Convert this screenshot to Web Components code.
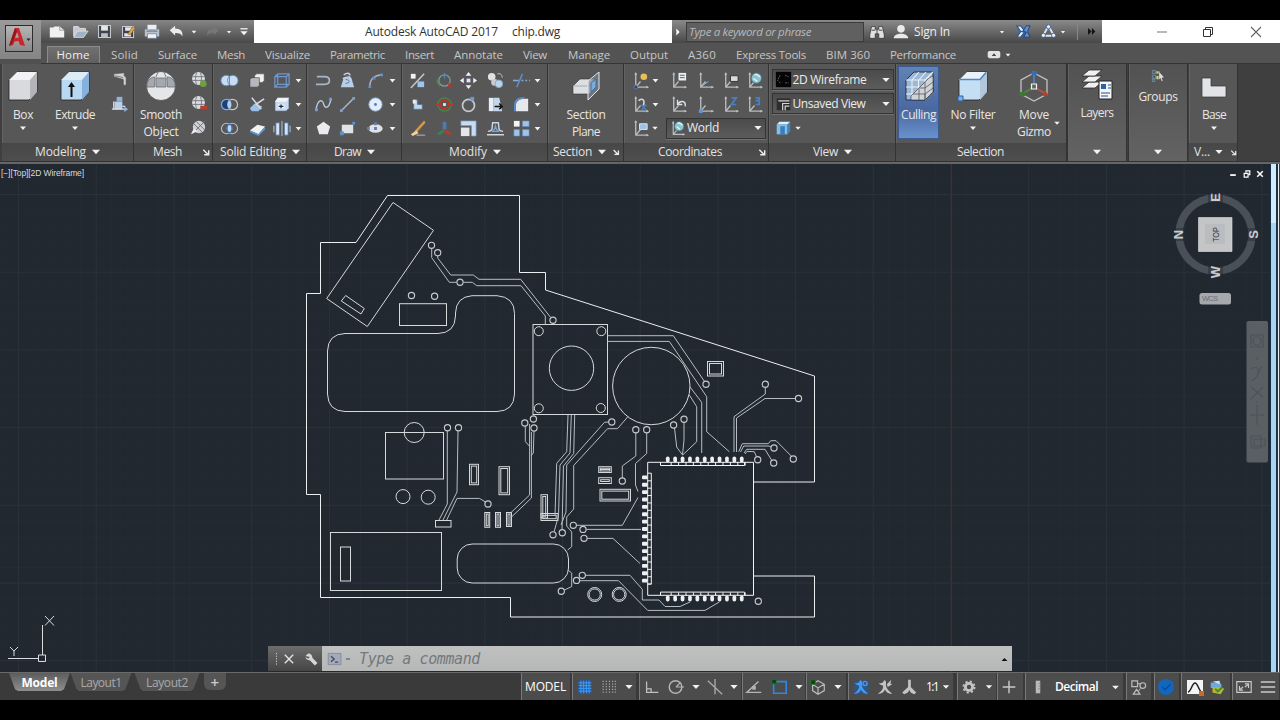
<!DOCTYPE html>
<html lang="en">
<head>
<meta charset="utf-8">
<title>Autodesk AutoCAD 2017 - chip.dwg</title>
<style>
html,body{margin:0;height:100%;background:#000;overflow:hidden}
</style>
</head>
<body>
<cad-app></cad-app>
<script>
const FONT='"Open Sans","Noto Sans",sans-serif';
const pen=document.createElement('canvas').getContext('2d');
const define=(name,render,after)=>customElements.define(name,class extends HTMLElement{
  connectedCallback(){
    if(!this.shadowRoot){this.attachShadow({mode:'open'}).innerHTML=render(this);}
    if(after)after(this);
  }
});
const at=(el,k,d)=>el.hasAttribute(k)?el.getAttribute(k):d;

/* ---------- icon library ---------- */
const B='#8fb8e4',DB='#4a7fc4';
const axes=`<path d="M5 2v15h13M5 17l5-6" fill="none" stroke="#b9bcc0" stroke-width="1.4"/><path d="M3.500 4 5 1l1.500 3M16 15.500 19 17l-3 1.500" fill="#b9bcc0"/>`;
const cube=(a,b,c)=>`<path d="M2 10 10 2h20v20l-8 8H2z" fill="${a}" stroke="#222" stroke-width=".8"/><path d="M2 10 10 2h20l-7 8z" fill="${b}"/><path d="M23 10 30 2v20l-7 8z" fill="${c}"/>`;
const ball=`<circle cx="10" cy="9" r="6.800" fill="#d8dadd"/><path d="M3.500 7h13M3.500 11h13M8 2.500c-1.500 4-1.500 9 0 13M12 2.500c1.500 4 1.500 9 0 13" stroke="#6d737a" fill="none" stroke-width=".9"/>`;
const figure=c=>`<path d="M9 2.500c3 0 2 4 2 6 1 4 4 6 7 9-5 0-7-2-8-5-1 3-3 5-8 5 4-3 6-5 6-9-2-1-4-1-5-3 3 1 5 0 6-3z" fill="${c}"/>`;
const ICONS={
 newdoc:`<path d="M2 5h4l1-1h6l5 4v8H2z" fill="#f0f0ee"/><path d="M13 4v4h5" fill="none" stroke="#999"/>`,
 open:`<path d="M3 15V4h5l2 2h6v3" fill="#c4c9cf" stroke="#dfe3e6"/><path d="m3 16 4-7h12l-5 7z" fill="#9fb2c6" stroke="#e6e9ec" stroke-width=".8"/>`,
 save:`<path d="M3 3h14v14H3z" fill="#3c434b" stroke="#c9cdd2" stroke-width="1.200"/><path d="M6 3h8v6H6z" fill="#e3e6e9"/><path d="M6 12h8v5H6z" fill="#b9bec4"/>`,
 saveas:`<path d="M3 4h13v13H3z" fill="#3c434b" stroke="#c9cdd2" stroke-width="1.200"/><path d="M6 5h8v4H6zM5 12h8v4H5z" fill="#e3e6e9"/><path d="m9 13 6-9 3 2-6 8z" fill="#dca24e" stroke="#6b4a1b" stroke-width=".5"/>`,
 print:`<path d="M5 2h10v5H5z" fill="#eceff1"/><path d="M2 7h16v8H2z" fill="#b9c2cb"/><path d="M5 12h10v5H5z" fill="#f4f4f4" stroke="#66809c" stroke-width=".8"/><path d="M4 9h12" stroke="#4e6a8a"/>`,
 undo:`<path d="M3 8 9 3v3c6 0 9 3 8 9-1-3-3-4-8-4v3z" fill="#e9ebed"/>`,
 redo:`<path d="m17 8-6-5v3c-6 0-9 3-8 9 1-3 3-4 8-4v3z" fill="#777"/>`,
 qat:`<path d="M5.500 6h9" stroke="#f4f4f4" stroke-width="1.600"/><path d="M5.500 9h9L10 14z" fill="#f4f4f4"/>`,
 binoc:`<path d="M4 4h4v3h4V4h4l2 9v4h-6v-5H8v5H2v-4z" fill="#dfe2e5" stroke="#222" stroke-width=".7"/><path d="M10 7v5M4 8h4M12 8h4" stroke="#333"/>`,
 user:`<circle cx="10" cy="6.500" r="4.200" fill="#e8eaec"/><path d="M2 17c0-4 4-4 6-5h4c2 1 6 1 6 5z" fill="#e8eaec"/>`,
 exch:`<path d="M3 4h4l4 5-3 1 3 1-4 5H3l4-6z" fill="#e6edf6" stroke="#2a5a9c" stroke-width="1.300"/><path d="M17 4h-4l-3 5 3 2-3 5h7l-3-6z" fill="#5a93d6" stroke="#1c427a"/>`,
 a360:`<path d="M10 3.500 3.500 15h13z" fill="none" stroke="#d8e6f8" stroke-width="2.200"/><circle cx="10" cy="4.500" r="2.500" fill="#e7eef7" stroke="#2d5c9c"/><circle cx="4" cy="14.500" r="2.500" fill="#e7eef7" stroke="#2d5c9c"/><circle cx="16" cy="14.500" r="2.500" fill="#e7eef7" stroke="#2d5c9c"/>`,
 ff:`<path d="m6 6 4 4-4 4zM10.500 6l4 4-4 4z" fill="#111"/>`,
 play:`<path d="m8 5.500 4 4.500-4 4.500z" fill="#fff"/>`,
 cam:`<rect x="3" y="5.500" width="14" height="8" rx="2" fill="#e2e2e2"/><path d="m7.500 11 2.500-3 2.500 3z" fill="#444"/>`,
 box:cube('#d9dade','#f2f2f4','#b3b5bb'),
 extrude:cube('#b9d8f2','#dcebf8','#86b1dc')+`<path d="M12.500 27V14" stroke="#111" stroke-width="2"/><path d="m9 17 3.500-5 3.500 5z" fill="#111"/>`,
 sphere:`<circle cx="16" cy="16" r="14.500" fill="#e4e6e8" stroke="#333" stroke-width=".6"/><path d="M11 8h10v9H11zM3 11c2-3 4-4 7-4l-.5 10H2c0-2 0-4 1-6zM29 11c-2-3-4-4-7-4l.5 10H30c0-2 0-4-1-6z" fill="#a5a9af" stroke="#6b6f75" stroke-width=".8"/><path d="M11 7 13 2M21 7l-2-5" stroke="#777b81"/>`,
 section:`<path d="m3 16 7-7h14v11l-5 4H3z" fill="#dcdee1" stroke="#333" stroke-width=".6"/><path d="M3 16h16l5-7" fill="none" stroke="#aaa"/><path d="M18 11 29 2v17L18 30z" fill="#7d8894" fill-opacity=".65" stroke="#e6e6e6"/><path d="m21 13 5-4v8l-5 5z" fill="#80aada" stroke="#3d6ea8"/>`,
 culling:`<path d="M3 10 11 2h19v20l-8 8H3z" fill="#9db8d6" stroke="#20334f"/><path d="M3 10h19M22 10l8-8M22 10v20M9 10v20M15.500 10v20M9 10l7-8M16 10l7-8M3 17h19l8-8M3 24h19l8-8M26 6v20" stroke="#e9f0f8" stroke-width="1.100" fill="none"/><path d="M8 30v-4L26 8l4-2v16l-8 8z" fill="#cfd4da" stroke="#333" stroke-width=".6"/><path d="M10 24h12v6M16 19v11M22 12v18M22 24l8-6M22 18l8-6M16 18h6" fill="none" stroke="#555" stroke-width=".8"/>`,
 nofilter:cube('#c4dff4','#e9f2fa','#b3c6da')+`<path d="M3 9.500h20l6-7" stroke="#4a86c8" stroke-width="1.600" fill="none"/><path d="M1 26h5v5H1z" fill="#7fb0e6" stroke="#2f5fa0"/>`,
 gizmo:`<path d="M16 3 29 10v14l-13 7L3 24V10z" fill="none" stroke="#c2c2c2" stroke-width="1.300"/><path d="M16 4v12" stroke="#4b86cc" stroke-width="1.600"/><path d="m16 17-12 7" stroke="#4c8c3c" stroke-width="1.600"/><path d="m16 17 12 7" stroke="#c0503a" stroke-width="1.600"/><path d="M13.500 1h5v4h-5z" fill="#2f6fc0"/><path d="M1 22h6v4H1z" fill="#3a7a2e"/><path d="m27 20 4 6h-6z" fill="#bc3e2a"/><path d="M13.500 14h5v5h-5z" fill="#666" stroke="#f2f2f2" stroke-width="1.200"/>`,
 layers:`<g fill="#f0f0f0" stroke="#2a2a2a" stroke-width=".8"><path d="m1 20 7-6h13l-7 6z"/><path d="m1 14 7-6h13l-7 6z"/><path d="m1 8 7-6h13l-7 6z"/></g><path d="M18 13h13v18H18z" fill="#f3f5f7" stroke="#222"/><path d="M20 16h5v5h-5z" fill="#2f5fa8"/><path d="M27 17h3M27 20h3M20 25h9M20 28h7" stroke="#274f8c"/>`,
 groups:`<path d="M3 3h4v4H3zM3 9h4v4H3zM3 14h3v3H3z" fill="#4d5f55" stroke="#7ba2d0" stroke-width=".8"/><path d="M8 4h4v3H8zM8 10h3v4H8z" fill="#cfd68a"/><path d="m11 4 7 8-3 .4 1.500 4-2 .6-1.500-4-2 2z" fill="#d9dde0" stroke="#333" stroke-width=".5"/>`,
 base:`<path d="M4 8h9v8h15v11H4z" fill="#e2e3e6" stroke="#333" stroke-width=".7"/>`,
 loft:`<path d="M4 4 15 3v3l2 2v8h-3v-6L4 7z" fill="#d0d2d5" stroke="#444" stroke-width=".6"/><path d="m5 6 9 2" stroke="#777"/>`,
 presspull:`<path d="M5 8h8v8H5z" fill="#bcd0e6"/><path d="M4 16V8M2 16h15M13 13h3" stroke="#dfe4ea" stroke-width="1.400" fill="none"/><path d="M7 3h6v5H7z" fill="#8fb3da"/><path d="m15 13 4 3-4 3z" fill="#8fb3da"/>`,
 meshplus:ball+`<circle cx="15" cy="14.500" r="3.500" fill="#6fa23c"/>`,
 meshminus:ball+`<path d="M12 12.500h7v3.500h-7z" fill="#b9402f"/>`,
 meshref:`<circle cx="10.500" cy="9.500" r="6.500" fill="#cfd1d5"/><path d="m3 17 14-14M5 6l9 9M8 4l8 8" stroke="#6d737a" fill="none"/><path d="m2 17 7-3-4-3z" fill="#ececec"/>`,
 union:`<circle cx="6.500" cy="10" r="5.500" fill="#c8dcf2" stroke="#5b8dc8"/><circle cx="13.500" cy="10" r="5.500" fill="#c8dcf2" stroke="#5b8dc8"/><path d="M10 6v8" stroke="#5b8dc8"/>`,
 subtract:`<circle cx="13" cy="10" r="5.500" fill="none" stroke="#c3c6ca" stroke-width="1.300"/><path d="M7 4.500a5.500 5.500 0 1 0 0 11c2 0 3-1 3-1-2.500-2.500-2.500-6.500 0-9 0 0-1-1-3-1z" fill="#1f3f78" stroke="#7da8dd" stroke-width="1.300"/><ellipse cx="10" cy="10" rx="2" ry="4" fill="#b2cdeb"/>`,
 intersect:`<circle cx="7" cy="10" r="5.500" fill="none" stroke="#b9bcc0" stroke-width="1.200"/><circle cx="13" cy="10" r="5.500" fill="none" stroke="#b9bcc0" stroke-width="1.200"/><ellipse cx="10" cy="10" rx="2.600" ry="4.300" fill="#bcd6f2" stroke="#3a6cb0" stroke-width="1.300"/>`,
 solids:`<path d="M7 5 9 3h8v7l-2 2H7z" fill="#f0f0f0" stroke="#555" stroke-width=".6"/><path d="M2 9 4 7h8v8l-2 2H2z" fill="#b4b7bc" stroke="#333" stroke-width=".6"/>`,
 slice:`<path d="m2 14 5-5 8 3-4 5H4z" fill="#9cc0e6"/><path d="M4 3 14 15M17 4 8 10" stroke="#d7dade" stroke-width="1.600"/>`,
 thicken:`<path d="m2 12 8-6 8 2-7 8z" fill="#eff1f3"/><path d="m2 12 9 4v2l-9-4zM11 16l7-8v3l-7 7z" fill="#5d93cf"/>`,
 extract:`<path d="M3 6 6 3h12v11l-3 3H3zM3 6h12v11M15 6l3-3M6 3v11h12M6 14l-3 3" fill="none" stroke="#6f97cf" stroke-width="1.300"/>`,
 faces:`<path d="m3 7 3-4h12v11l-3 3H3z" fill="#c8dbef" stroke="#345" stroke-width=".7"/><path d="m3 7 3-4h12l-3 4z" fill="#eef4fa"/><path d="M6 10h7v4H6z" fill="#eef4fa"/><path d="M7 12h5M9.500 14V10" stroke="#1b2b3c" stroke-width="1.300"/>`,
 separate:`<path d="M4 4h4v13H4zM13 4h4v13h-4z" fill="#d4e4f4" stroke="#456b98" stroke-width=".8"/><path d="M10.500 2v16M2 7v7M19 7v7" stroke="#b9ccdf"/>`,
 pline:`<path d="M3 6h8c7 0 7 8 0 8H2" fill="none" stroke="#a3b6cc" stroke-width="1.800"/>`,
 helix:`<path d="M6 4c6-4 9 1 4 3M5 8c8-4 11 0 5 4" fill="none" stroke="#cfd3d8" stroke-width="1.500"/><path d="m3 17 3-10h8l3 10z" fill="#b9cfe7"/><path d="M8 5h6M8 9c5 0 5 4 0 4" stroke="#51749e" fill="none"/>`,
 arc:`<path d="M4 16C4 9 8 5 16 4" fill="none" stroke="#a9b0b8" stroke-width="1.500"/><path d="M2.500 15h3v3h-3zM15 2.500h3v3h-3zM7 6h3v3H7z" fill="#5f8fc9"/>`,
 spline:`<path d="M2 16C4 3 9 5 10 9s5 8 8-5" fill="none" stroke="#b9c9dc" stroke-width="1.500"/><path d="M1 14h3v3H1zM16 3h3v3h-3z" fill="#77a0d2"/>`,
 line:`<path d="M4 16 16 4" stroke="#a6b3c2" stroke-width="1.700"/><path d="M2 15h3v3H2zM15 2h3v3h-3z" fill="#77a0d2"/>`,
 circle:`<circle cx="10" cy="10" r="7" fill="#e3edf7" stroke="#8ba9cb"/><circle cx="10" cy="10" r="1.500" fill="#4c7fc0"/>`,
 polygon:`<path d="m10 3 7 5-2.500 8h-9L3 8z" fill="#e9ebee"/>`,
 rect:`<path d="M4 6h12v9H4z" fill="#dfe3e8"/><path d="M2 13h4v4H2zM15 3h3v3h-3z" fill="#5f8fc9"/>`,
 ellipse:`<ellipse cx="10" cy="10" rx="7.500" ry="4.500" fill="#dfe3e8"/><path d="M8.500 8.500h3v3h-3zM8.500 3.500h3v3h-3zM1 8.500h3v3H1z" fill="#5f7fa9"/>`,
 array1:`<path d="M3 3h5v5H3z" fill="#f1f1f1"/><path d="M3 18 17 3" stroke="#c7c9cc" stroke-width="1.500"/><path d="M10 11h7v6h-7z" fill="#9cc4ee"/>`,
 rot3a:`<circle cx="10" cy="10" r="6" fill="none" stroke="#7c9aa0" stroke-width="1.300"/><path d="M10 2v6" stroke="#4a8fca"/><path d="M14 13h4v4h-4z" fill="#b03630"/><path d="M3 8a7 7 0 0 0 2 8" stroke="#3f8c3c" fill="none" stroke-width="1.500"/>`,
 move:`<path d="m10 1 3 4h-6zM10 19l3-4h-6zM1 10l4-3v6zM19 10l-4-3v6z" fill="#f0f1f2"/><path d="M7.500 7.500h5v5h-5z" fill="#e3e7ec" stroke="#557"/>`,
 copy:`<circle cx="6" cy="6" r="4" fill="#dfe1e4"/><circle cx="9" cy="12" r="3.500" fill="#c9cdd2"/><circle cx="13.500" cy="13.500" r="4" fill="#bcd3ec" stroke="#89a7c9"/><path d="M12 3c4-1 5 2 5 4" fill="none" stroke="#ccc"/>`,
 trim:`<path d="M1 10h6M10 10h2M14 10h2M18 10h1" stroke="#86acd6" stroke-width="1.600"/><path d="M5 17 11 3" stroke="#5f8fc9" stroke-width="1.600"/>`,
 offset:`<path d="M6 5h4v5h5v5H6z" fill="#bcd6f2" stroke="#55718f" stroke-width=".8"/><path d="M5 5h3v4H5z" fill="#eee"/>`,
 rot3b:`<circle cx="10" cy="10" r="7" fill="none" stroke="#3f8a4a" stroke-width="1.300"/><circle cx="10" cy="10" r="4.500" fill="none" stroke="#b7372f" stroke-width="1.800"/><path d="M8.500 8.500h3v3h-3z" fill="#e2e6ea"/><path d="M1 10h4M15 10h4" stroke="#b7372f" stroke-width="1.300"/>`,
 rotate:`<circle cx="10" cy="11" r="6.300" fill="none" stroke="#c5c8cc" stroke-width="1.800"/><path d="M12 2h4v4h-4z" fill="#6a9ad0"/>`,
 stretch:`<path d="M3 3h5v14H3z" fill="#e9eef4"/><path d="M8 3h6l3 14H8z" fill="#c2d6ec"/><path d="M9 12h8m-3-3 3 3-3 3" stroke="#111" fill="none" stroke-width="1.600"/>`,
 fillet:`<path d="M4 17V11c0-5 5-7 9-7h4v13z" fill="#e6e8eb"/><path d="M3 17V11c0-6 5-8 10-8" fill="none" stroke="#5a8ccc" stroke-width="1.800"/>`,
 erase:`<path d="m17 2 1 2-9 10-2-1z" fill="#e39a3b" stroke="#e39a3b" stroke-width=".6"/><path d="M9 12 3 16l2 2 6-3z" fill="#f2d3a0"/><path d="M9 17h9" stroke="#bbb"/>`,
 gizmo3:`<path d="M8 3h4v8H8z" fill="#4e7aae"/><path d="m9 11-7 4 3 2 6-4z" fill="#3c8150"/><path d="m11 11 7 4-4 2-5-4z" fill="#b23d33"/>`,
 scale:`<path d="M2 2h16v16h-5V7H2z" fill="#c8ddf3" stroke="#6f94bd" stroke-width=".8"/><path d="M2 9h9v9H2z" fill="#e4e6e9"/>`,
 offset2:`<path d="M1 16.500h18M2 13c6 0 4-4 5-9h6c1 5-1 9 5 9" fill="none" stroke="#cfd5dc" stroke-width="1.500"/><path d="M6 13c4-1 3-3 4-6 1 3 0 5 4 6z" fill="none" stroke="#7ea5d4" stroke-width="1.300"/>`,
 array:`<path d="M2 2h6v6H2z" fill="#f4f4f4"/><path d="M11 2h7v6h-7zM2 11h6v7H2zM11 11h7v7h-7z" fill="#9ec2ea" stroke="#5d87b8" stroke-width=".6"/>`,
 ucs:axes+`<circle cx="13.500" cy="6" r="3.500" fill="#e8bd55"/><circle cx="5" cy="17" r="2" fill="#444" stroke="#4b86cc"/>`,
 ucsx:axes+`<path d="M8 6c4-4 7 0 5 5" fill="none" stroke="#d4d6d9" stroke-width="1.600"/><path d="m11 10 5 6m0-6-5 6" stroke="${DB}" stroke-width="1.500"/>`,
 ucsface:axes+`<path d="M9 5h8v6H9z" fill="#9dc0e8" stroke="#dfe6ee"/>`,
 ucsnamed:axes+`<path d="M10 2h8v8h-8z" fill="#eceff2"/><path d="M11.500 4.500h5M11.500 7h5" stroke="#557"/>`,
 ucsplain:axes+`<path d="m6 16 7-5" stroke="${B}"/>`,
 ucsview:axes+`<path d="M10 5h8v6h-8z" fill="#d9dcdf" stroke="#333"/>`,
 ucsworld:axes+`<circle cx="12" cy="7.500" r="5.500" fill="#8fc3cf" stroke="#3d7485"/><path d="M10 4c3-2 4 2 6 2M9 8l4 3" stroke="#e6f3f4" stroke-width="1.500" fill="none"/>`,
 ucsprev:axes+`<path d="M9 5v5h5M9 10c3-5 9-4 8 2" fill="none" stroke="#dcdee1" stroke-width="1.500"/>`,
 ucsorg:axes+`<path d="M3 15h4v4H3z" fill="#5f93d3"/>`,
 ucsz:axes+`<path d="M11 3h5l-5 7h5" fill="none" stroke="${DB}" stroke-width="1.800"/>`,
 ucs3:axes+`<path d="M11 3h4v7h-4M11 6h4" fill="none" stroke="${DB}" stroke-width="1.800"/>`,
 vs:`<path d="M1 1h18v18H1z" fill="#050505"/><path d="M6 5 3 11l4 4M12 5l4 2M12 14h4" stroke="#777" fill="none" stroke-dasharray="2 1"/>`,
 uv:`<path d="M2 4h16v14H2z" fill="#2d2d2d"/><path d="M4 7h13M9 18V10h8M12 18v-5h5" stroke="#d5d5d5" stroke-width="1.400" fill="none"/>`,
 vp:`<path d="m3 6 3-3h12l-3 3z" fill="#dff0fc"/><path d="M3 6h12v11H3z" fill="#7fc0ee"/><path d="m15 6 3-3v11l-3 3z" fill="#3f86c0"/><path d="M7 8h5v9H7z" fill="#3f7db8"/>`,
 launch:`<path d="M7 7.500 12 12.500M13 8v5H8" stroke="#eee" stroke-width="1.600" fill="none"/>`,
 wrench:`<path d="M3 6 6 3c4 0 5 3 5 5l6 6-3 3-6-6c-3 0-5-2-5-4l3 2 2-2z" fill="#d5d7d9"/>`,
 close:`<path d="m4 4 12 12m0-12L4 16" stroke="#e2e2e2" stroke-width="2"/>`,
 prompt:`<path d="M1.500 3h16v14h-16z" fill="#a4aab8" stroke="#7f8798"/><path d="m5 6.500 4 3.500-4 3.500M10 14h4" fill="none" stroke="#3f4660" stroke-width="1.600"/>`,
 grip:`<path d="M10 0v20" stroke="#c9c9c9" stroke-width="1.500" stroke-dasharray="2 2"/>`,
 gridon:`<rect x="2" y="2" width="16" height="16" rx="4" fill="#1d5fae" opacity=".55"/><path d="M5.500 3v14M8.500 3v14M11.500 3v14M14.500 3v14M3 5.500h14M3 8.500h14M3 11.500h14M3 14.500h14" stroke="#3d9bff" stroke-width="1.100"/>`,
 snap:`<path d="M3.500 3v14M7 3v14M10.500 3v14M14 3v14M17 3v14" stroke="#a8a8a8" stroke-width="1.300" stroke-dasharray="1.400 1.600"/>`,
 ortho:`<path d="M4 4v12h13M4 12h5v4" fill="none" stroke="#bfbfbf" stroke-width="1.400"/>`,
 polar:`<circle cx="9.500" cy="10" r="7" fill="none" stroke="#b5b5b5" stroke-width="1.600"/><path d="M10 10h9M10 10l5-5" stroke="#b5b5b5" stroke-width="1.200"/>`,
 iso:`<path d="m2 3 16 15M10 1v17" stroke="#a9a9a9" stroke-width="1.500"/>`,
 otrack:`<path d="M18 16H2L15 4" fill="none" stroke="#b5b5b5" stroke-width="1.500"/><path d="M8 9h4v4H8z" fill="#b5b5b5"/>`,
 osnap:`<path d="M4 4h14v13H4z" fill="none" stroke="#2f86e6" stroke-width="1.800"/><path d="M2 1.500h5v5H2z" fill="#123c16" stroke="#1f7a2c"/>`,
 osnap3:`<path d="m10 3 7 4v7l-7 4-6-4V7zM4 7l6 4 7-4M10 11v7" fill="none" stroke="#bcbcbc" stroke-width="1.300"/><path d="M2 2h5v5H2z" fill="#123c16" stroke="#1f7a2c"/>`,
 anno1:`<rect x="1" y="3" width="18" height="15" rx="5" fill="#1d5fae" opacity=".45"/>`+figure('#3d9bff')+`<circle cx="14.500" cy="6" r="2.300" fill="none" stroke="#3d9bff" stroke-width="1.500"/>`,
 anno2:figure('#c4c4c4')+`<path d="m12 7 5-5-1 4 2 1-5 3z" fill="#c4c4c4"/>`,
 anno3:`<path d="M9 2h3v8l6 6-2 2c-3-1-5-2-5.500-5-1 3-3 4-6 5l-2-2 6.500-6z" fill="#c4c4c4"/>`,
 gear:`<circle cx="10" cy="10" r="4.500" fill="none" stroke="#c4c4c4" stroke-width="3.500"/><circle cx="10" cy="10" r="7" fill="none" stroke="#c4c4c4" stroke-width="2.200" stroke-dasharray="2.750 2.750"/>`,
 plus:`<path d="M10 3v14M3 10h14" stroke="#c9c9c9" stroke-width="1.600"/>`,
 unit:`<path d="M7.500 3h5v14h-5z" fill="#b9b9b9"/><path d="M10.500 6h2M10.500 9h2M10.500 12h2" stroke="#888"/>`,
 quick:`<path d="M3 3h6v6H3zM8 12l3.500 5h-7z" fill="none" stroke="#bcbcbc" stroke-width="1.300"/><circle cx="14.500" cy="8" r="3" fill="none" stroke="#bcbcbc" stroke-width="1.300"/><path d="M9 6h3M12 11l-2 3" stroke="#bcbcbc"/>`,
 perf:`<circle cx="10" cy="10" r="9" fill="#1366bd"/><path d="m6 10 3 3 6-6" fill="none" stroke="#0d4c96" stroke-width="1.600"/>`,
 graph:`<path d="M2 3h16v14H2z" fill="#f4f4f4"/><path d="M3 15c3 0 4-9 7-9s4 9 7 9" fill="none" stroke="#222" stroke-width="1.500"/><path d="M14 14h5v5h-5z" fill="#cf6a25"/>`,
 trust:`<path d="M3 5h10l2 2v4H3z" fill="#6ea8dc"/><path d="m5 4 8-1v4z" fill="#cfe4f6"/><path d="M5 10h9l4 2-4 6-9-2z" fill="#b3b832"/><path d="m8 12 3 3 5-5" stroke="#3c8c31" stroke-width="2" fill="none"/>`,
 full:`<path d="M2 4h16v12H2z" fill="none" stroke="#c9c9c9" stroke-width="1.300"/><path d="m5 13 4-3M15 7l-4 3" stroke="#c9c9c9" stroke-width="1.400"/><path d="M5 9v4.500h4M11 6.500h4V11" fill="none" stroke="#c9c9c9" stroke-width="1.300"/>`,
 menu:`<path d="M2 4.500h16M2 10h16M2 15.500h16" stroke="#c9c9c9" stroke-width="1.800"/>`,
 wmin:`<path d="M5 10h10" stroke="#8a8a8a" stroke-width="1.200"/>`,
 wmax:`<path d="M5.500 7.500h7v7h-7zM7.500 7.500v-2h7v7h-2" fill="none" stroke="#333" stroke-width="1"/>`,
 wclose:`<path d="m5 5 10 10m0-10L5 15" stroke="#666" stroke-width="1.100"/>`,
 dmin:`<path d="M6 11.500h8" stroke="#fff" stroke-width="2.500"/>`,
 dmax:`<path d="M6 9h5.500v5.500H6zM8.500 8V5.500H14V11H12.500" fill="none" stroke="#fff" stroke-width="1.700"/>`,
 dclose:`<path d="m6 6 8 8m0-8-8 8" stroke="#fff" stroke-width="2.200"/>`,
 arr:`<path d="M7 8.500h6L10 12z" fill="#f2f2f2"/>`,
 arrL:`<path d="M5.500 7.600h9L10 12.400z" fill="#f2f2f2"/>`,
 up:`<path d="M6 12h8l-4-4z" fill="#111"/>`,
 minus:`<path d="M7 10h6" stroke="#60666f" stroke-width="1.800"/>`,
};
define('cad-icon',e=>{const n=at(e,'name'),big=+at(e,'box',20),s=+at(e,'w',20);
 return `<style>:host{display:block;flex:none;width:${s}px;height:${s}px}svg{display:block;overflow:visible}</style><svg width="${s}" height="${s}" viewBox="0 0 ${big} ${big}">${ICONS[n]||''}</svg>`});

/* Text whose tracking is tuned so that it spans a given width. */
define('cad-text',e=>`<style>:host{display:block;flex:none;white-space:nowrap;line-height:16px}</style><slot></slot>`,e=>{
 const s=at(e,'size','12'),w=+at(e,'w'),f=at(e,'font',FONT),t=e.textContent;
 pen.font=`${at(e,'slant','')} ${at(e,'weight','400')} ${s}px ${f}`;
 e.style.cssText+=`;width:${w}px;font:${at(e,'slant','')} ${at(e,'weight','400')} ${s}px/16px ${f};letter-spacing:${((w-pen.measureText(t).width)/t.length).toFixed(3)}px`;
});

/* Horizontal track: each child names its centre (c) and width (w), relative to the track's origin (o). */
define('cad-track',e=>`<style>:host{display:flex;align-items:center;flex:none;min-width:0}</style><slot></slot>`,e=>{
 let x=+at(e,'o',0);
 for(const k of e.children){const w=+at(k,'w',20),l=+at(k,'c')-w/2;k.style.marginLeft=(l-x)+'px';k.style.width=w+'px';x=l+w;}
});
const I=(n,c,w=20,b)=>`<cad-icon name="${n}" c="${c}" w="${w}"${b?` box="${b}"`:''}></cad-icon>`;
const T=(t,l,r,x='')=>`<cad-text c="${(l+r)/2}" w="${r-l}" ${x}>${t}</cad-text>`;
const TR=(o,body,css='')=>`<cad-track o="${o}" style="${css}">${body}</cad-track>`;

/* Large ribbon button: icon, one or two label lines, optional arrow. */
define('cad-button',e=>`<style>
:host{display:flex;flex-direction:column;align-items:center;flex:none;box-sizing:border-box;height:73px;padding-top:4px;color:#e6e6e6}
:host([on]){background:linear-gradient(#6283b4,#4a68a0 60%,#6a93cc);outline:1px solid #3a5c92;outline-offset:-1px}
.l{margin-top:5px;line-height:16px;display:flex;flex-direction:column;align-items:center;gap:1px}
.a{margin-top:-5px}</style>
<cad-icon name="${at(e,'icon')}" w="${at(e,'is','32')}" box="${at(e,'box','32')}"></cad-icon>
<div class="l">${at(e,'label').split('|').map(s=>{const[t,w]=s.split(':');return `<cad-text w="${w}">${t}</cad-text>`}).join('')}</div>
${e.hasAttribute('arrow')?`<cad-icon class="a" name="arr"></cad-icon>`:''}`);

define('cad-panel',e=>`<style>
:host{display:flex;flex-direction:column;flex:none;box-sizing:border-box;width:${at(e,'pw')}px;height:97px;border-right:1px solid #333;background:#575757;box-shadow:inset 1px 0 #636363;color:#e2e2e2}
:host([collapsed]){background:linear-gradient(#525252,#636363);outline:1px solid #333;border:0;margin:0 2px 0 1px}
.b{height:79px;display:flex;align-items:flex-start}
.t{height:18px;background:linear-gradient(#474747,#4e4e4e);display:flex;align-items:center}
:host([collapsed]) .t{background:none}</style>
<div class="b"><slot></slot></div><div class="t"><slot name="title"></slot></div>`);
const panel=(o,r,title,body,x='')=>`<cad-panel pw="${r-o}" ${x}>${body}<cad-track slot="title" o="${o}" style="align-items:center;height:20px">${title}</cad-track></cad-panel>`;

/* Stack of rows of small icons. */
define('cad-stack',e=>`<style>:host{display:flex;flex-direction:column;flex:none;padding-top:${at(e,'pt',4)}px}::slotted(cad-track){height:24px;align-items:center!important}::slotted(cad-icon){margin-bottom:5px}</style><slot></slot>`);
const stack=(o,rows)=>`<cad-stack>${rows.map(r=>TR(o,r,'align-items:center')).join('')}</cad-stack>`;
const column=(c,names)=>`<cad-stack c="${c}" w="19" pt="4">${names.split(' ').map(n=>`<cad-icon name="${n}" w="19"></cad-icon>`).join('')}</cad-stack>`;
const row=(names,cs)=>names.split(' ').map((n,i)=>I(n,cs[i],19)).join('');

define('cad-combo',e=>`<style>:host{display:flex;align-items:center;box-sizing:border-box;height:21px;background:linear-gradient(#4b4b4b,#5c5c5c);border:1px solid #343434;box-shadow:0 1px #707070;color:#ececec}
.g{flex:1}cad-icon{margin-left:2px}.t{margin-left:1px}</style>
<cad-icon name="${at(e,'icon')}" w="17"></cad-icon><cad-text class="t" w="${at(e,'tw')}">${at(e,'text')}</cad-text><div class="g"></div><cad-icon name="arrL" w="16" style="margin-right:-1px"></cad-icon>`);

define('cad-title',()=>`<style>:host{display:flex;height:23px;background:#fff;flex:none}
.q{width:213px;background:linear-gradient(#858585,#494949)}.q>*,.s>*{height:23px}
.n{width:418px;color:#333}.n>*{height:23px}
.s{width:430px;background:linear-gradient(#8a8a8a,#474747)}
.f{height:20px;box-sizing:border-box;background:#606060;border:1px solid #3c3c3c;color:#b9b9b9;display:flex;align-items:center;padding-left:2px}
.w>*{height:23px}</style>
<div class="q">${TR(41,I('newdoc',57,18)+I('open',80,18)+I('save',104,17)+I('saveas',128,17)+I('print',152,18)+I('undo',176,18)+I('arr',194,16)+I('redo',213,16)+I('arr',229,14)+I('qat',244,16))}</div>
<div class="n">${TR(254,T('Autodesk AutoCAD 2017',365,498)+T('chip.dwg',512,560))}</div>
<div class="s">${TR(672,I('play',678,16)+`<div class="f" c="775" w="178"><cad-text size="11.500" w="122" slant="italic">Type a keyword or phrase</cad-text></div>`+I('binoc',877,18)+I('user',901,18)+T('Sign In',914,950,'style="color:#eee"')+I('arr',1002,14)+I('exch',1023,19)+I('a360',1048,17)+I('arr',1063,14)+`<div c="1077" w="1" style="height:16px;background:#888"></div>`+I('ff',1091,17))}</div>
<div class="w">${TR(1102,I('wmin',1162)+I('wmax',1208)+I('wclose',1256))}</div>`);

define('cad-tabs',()=>{
 const tabs=[['Home',55,88],['Solid',111,138],['Surface',158,197],['Mesh',217,245],['Visualize',265,310],['Parametric',330,385],['Insert',405,434],['Annotate',454,503],['View',523,547],['Manage',568,610],['Output',630,668],['A360',688,716],['Express Tools',736,806],['BIM 360',826,870],['Performance',890,956]];
 return `<style>:host{display:flex;height:21px;background:#535353;border-bottom:1px solid #363636;box-sizing:border-box;color:#c6c6c6;flex:none}
 cad-track{height:20px;padding-top:3px;box-sizing:border-box}.h{height:17px;box-sizing:border-box;border:1px solid #8a8a8a;border-bottom:0;background:linear-gradient(#707070,#606060);display:flex;justify-content:center;align-items:center;color:#eee}</style>`
 +TR(41,tabs.map(([t,l,r],i)=>i?T(t,l,r,'size="11.500"'):`<div class="h" c="73" w="53"><cad-text w="33" size="11.500">${t}</cad-text></div>`).join('')+I('cam',994,18)+I('arr',1008,16))});

define('cad-ribbon',()=>{
 const B=(icon,label,c,w,x='')=>`<cad-button icon="${icon}" label="${label}" c="${c}" w="${w}" ${x}></cad-button>`;
 const s=[229,257,281,298],d=[323,347,375,392],m=[417,444,468,495,521,537];
 return `<style>:host{display:flex;height:100px;box-sizing:border-box;background:#3f3f3f;padding-left:2px;border-bottom:2px solid #666;flex:none;box-shadow:inset 0 -1px #333}
 cad-track{align-items:flex-start}.col{display:flex;flex-direction:column;gap:3px}</style>`
 +panel(2,134,T('Modeling',35,86)+I('arrL',96,18),TR(2,B('box','Box:20',23,40,'arrow')+B('extrude','Extrude:40',75,50,'arrow')+column(119,'loft presspull'),'padding-top:2px'))
 +panel(134,213,T('Mesh',153,182)+I('launch',206,18),TR(134,B('sphere','Smooth:42|Object:35',161,46)+column(198,'meshplus meshminus meshref'),'padding-top:2px'))
 +panel(213,307,T('Solid Editing',220,286)+I('arrL',296,18),stack(213,[row('union solids extract arr',s),row('subtract slice faces arr',s),row('intersect thicken separate arr',s)]))
 +panel(307,402,T('Draw',334,361)+I('arrL',371,18),stack(307,[row('pline helix arc arr',d),row('spline line circle arr',d),row('polygon rect ellipse arr',d)]))
 +panel(402,548,T('Modify',449,487)+I('arrL',497,18),stack(402,[row('array1 rot3a move copy trim arr',m),row('offset rot3b rotate stretch fillet arr',m),row('erase gizmo3 scale offset2 array arr',m)]))
 +panel(548,624,T('Section',553,592)+I('arrL',602,18)+I('launch',616,16),TR(548,B('section','Section:39|Plane:28',586,50),'padding-top:2px'))
 +panel(624,769,T('Coordinates',658,722)+I('launch',762,18),stack(624,[row('ucs arr ucsnamed ucsplain ucsview ucsworld',[640,655,678,705,730,754]),row('ucsx arr ucsprev ucsorg ucsz ucs3',[640,655,678,705,730,754]),I('ucsface',640,19)+I('arr',655,18)+`<cad-combo c="716" w="100" icon="ucsworld" tw="32" text="World"></cad-combo>`]))
 +panel(769,896,T('View',813,838)+I('arrL',848,18),TR(769,`<div class="col" c="832.500" w="122"><cad-combo icon="vs" tw="74" text="2D Wireframe"></cad-combo><cad-combo icon="uv" tw="73" text="Unsaved View"></cad-combo>${TR(771.5,I('vp',783,18)+I('arr',798,18),'padding-top:2px')}</div>`,'padding-top:5px'))
 +panel(896,1067,T('Selection',957,1004),TR(896,B('culling','Culling:35',918.5,41,'on')+B('nofilter','No Filter:45',973,50,'arrow')+B('gizmo','Move:30|Gizmo:34',1034,38)+`<cad-icon name="arr" c="1057" w="18" style="margin-top:48px"></cad-icon>`,'padding-top:2px'))
 +panel(1068,1126,I('arrL',1097,18),TR(1068,B('layers','Layers:33',1097,50,'')),'collapsed')
 +panel(1129,1187,I('arrL',1158,18),TR(1129,B('groups','Groups:39',1158,50,'is="16" box="20"')),'collapsed')
 +panel(1189,1238,T('V...',1194,1210)+I('arrL',1219,16)+I('launch',1233,15),TR(1189,B('base','Base:24',1214,40,'arrow'),'padding-top:2px'))});

/* ---------- drawing area ---------- */
define('cad-drawing',()=>{
 let g='',maj='';
 for(let i=-6;i<82;i++){const x=96.3+i*15.54;if(i%5)g+=`M${x.toFixed(1)} 164V672`;else maj+=`M${x.toFixed(1)} 164V672`;}
 for(let i=-1;i<31;i++){const y=194.5+i*15.54;if(i%5)g+=`M0 ${y.toFixed(1)}H1270`;else maj+=`M0 ${y.toFixed(1)}H1270`;}
 const via=[[431.5,245.3],[437.7,252.7],[460,282.3],[411.5,295.5],[434.6,296.3],[553,320.3],[706,384.2],[765.3,384.2],[798.5,398.5],[774,448],[793.3,459],[773.7,463],[757.7,459.7],[611.8,422],[553,534.8],[562.3,532.7],[573.3,525.3],[583,529.4],[584,538.3],[582.3,575.3],[576.5,580.4],[561.3,591.2],[635.8,429.7],[646.7,429.7],[673.6,425],[684,419.3],[622.3,481],[758.3,601.2],[447.5,427.8],[458.5,427.8],[488,504],[524.8,423],[533.4,419],[534,428]];
 const lines=['431.7,249 431.7,257.7 449.3,282.3 456.5,282.3','463.500,282.3 472.3,282.3 476.7,285.7 521,285.7 545.3,316 545.3,324.5','437.7,256 437.7,258 450.7,275 473.3,275 479,279.3 520.7,279.3 550.7,317.5',
 '607.500,335.7 673.3,335.7 704.3,381.2','607.500,341.4 669.3,341.4 706.7,396.7 706.7,431.7 729.3,451.7','690,387 701.7,402.3 701.7,453','689.3,395 696.7,406.7 696.7,441.7 682.7,455',
 '765.3,387.5 765.3,394 734,416.7 734,452','795,398.5 765,398.5 736.5,418 736.5,452','738.7,451.7 742.3,443.7 768.3,443.7 770.7,440.7 776,440.7 791.5,456.3','740.5,452 743.7,446 769,446 771,447','744,453 746.7,449.3 765,449.3 771.5,460','745,454 747,451.4 754.3,451.7 756.5,456.7',
 '568,415 566.7,451.7 556.7,463.3 555,515','571.3,415 570,453 560,465 558.500,516 554,532','574.7,415 573.7,453.5 563.5,466 562,530','608.500,422 604.5,422.3 566.7,465 566,512 561,525','628,416.500 617.5,428.7 607.5,428.7 573.7,465.5 573.7,509 566.7,517 566.7,526 571.7,532 571.7,546.7 567.7,550',
 '576.600,525.3 622.3,525.3 638,497.5','586.300,529.4 641,529.4','587,538.400 613,538.400 640,563.500','585.500,575.3 630,575.3 642.3,589.3 642.3,600 659,600 665,606.5 680,606.5 690,602','580,580.7 618.5,580.7 647.7,610.4 705,610.4 719.3,602','635.800,433 635.8,456 622.3,466 622.3,478','646.700,433 646.7,453.5 635.5,463.5 635.5,485 638,491.5','674.500,428 676.7,447 682.5,455 684,440 684,422.5','564.500,590 571.7,586.5 571.7,573 568,570',
 '447.300,431 447.3,504 439,520','458,431 457,492 443,520','485.500,502 479.5,498.4 457,498.4 446.7,520','525.300,426.3 525.3,441.5 529.3,446','529.600,424 529.6,495 510.5,513','531.400,432 531.4,498 511.5,517','534,431.300 533.3,453 531,456'];
 const R=(x,y,x2,y2,r=0)=>`<rect x="${x}" y="${y}" width="${x2-x}" height="${y2-y}" rx="${r}"/>`;
 const D=(x,y,x2,y2,i=2)=>R(x,y,x2,y2)+R(x+i,y+i,x2-i,y2-i);
 const C=(x,y,r)=>`<circle cx="${x}" cy="${y}" r="${r}"/>`;
 let pins='',teeth='';
 for(let i=0;i<11;i++){const x=667.7+i*7.4;pins+=`<rect x="${x-1.800}" y="456.500" width="3.700" height="6" rx="1.800"/><rect x="${x-1.800}" y="595.500" width="3.700" height="6" rx="1.800"/>`;teeth+=`M${x+3.5} 462v3.500M${x+3.5} 592.500v3`;}
 for(let i=0;i<15;i++){const y=477.3+i*7.38;pins+=`<rect x="642" y="${y-1.900}" width="5.500" height="3.900" rx="1"/>`;teeth+=`M647.500 ${y+3.5}h4`;}
 return `<style>:host{display:grid;height:508px;background:#212830;position:relative;overflow:hidden;flex:none}
 svg{display:block;grid-area:1/1}
 .cmd{position:absolute;left:268px;top:482px;width:744px;height:25px;display:flex;background:linear-gradient(#bfc1c1,#b6b8b8)}
 .tool{width:54px;background:linear-gradient(#6c6c6c,#454545)}.cmd cad-track{height:26px}
 .vp{position:absolute;left:1px;top:1px;color:#d9dcde}
 .win{position:absolute;left:1223px;top:3px}
 .sc{position:absolute;right:0;top:0;width:10px;height:508px;background:linear-gradient(90deg,#14304a 0 1px,#a9d2ee 1px 6px,#1f3144 6px 8px,#e8eef2 8px 9px,#33414d 9px)}
 .sc i{display:block;margin-left:1px;width:5px;height:59px;background:#d2ebfa}
 </style>
 <svg width="1280" height="508" viewBox="0 164 1280 508">
 <path d="${g}" stroke="#242b34" fill="none"/><path d="${maj}" stroke="#2a323c" fill="none"/><path d="M951.500 164V672" stroke="#4a2c30" fill="none"/><path d="M950.500 164V672" stroke="#2e2930" fill="none"/>
 <g fill="none" stroke="#d5d9dc" stroke-width="1">
 <path stroke="#eceff1" d="M356 242.500 387.500 195.500H519.500V272.500H545.500V290L814.500 376V482H753.500M753.500 576H814.500V617H510.500V597.500H320.500V494.500H306.500V293.500H320.500V242.500H356"/>
 <path d="M393 202.500 433.500 230.300 367.300 326.500 326.700 298.500z"/><path d="M345.700 295.500 364.300 308.500 361 314 341.300 301z"/>
 ${R(399.5,303.7,446.5,325.5)}
 <path d="M472 295.700H497Q514.500 297 514.500 313.500V394Q514 411 497 411.500H345Q328 411 327.500 394V351Q328 334 345 333.500H438Q455 333 455.500 316V313Q456 297 472 295.700z"/>
 ${R(533,324.5,607.5,414.5)}${C(538.8,331.2,4.5)}${C(601.3,331.2,4.5)}${C(538.8,408.3,4.5)}${C(600.8,408,4.5)}${C(571.5,368.2,22.2)}${C(651.3,386,38.7)}
 ${D(707.5,361.5,723.5,376,2)}${D(598.7,466.7,611.3,472.500,1.5)}<path d="M600 469.500h10"/>${D(598.7,477.7,611.3,483.5,2)}${D(600,489.3,630.5,501,1.800)}
 ${C(594.7,594.5,7)}${C(594.7,594.5,5.6)}${C(619.2,594.4,7)}${C(619.2,594.4,5.6)}
 ${R(385.500,432.5,443.5,479)}${C(414.2,432.5,10)}${C(403,496.6,7)}${C(428.2,497.2,7)}
 ${R(435.500,520.5,451,527)}${D(469.5,464.3,478.5,484.700,1.800)}${D(499,466.7,509.5,494.7,1.800)}${D(541,494.7,547.5,518,1.800)}${D(541,513.500,558,520.500,1.800)}
 ${D(484.8,512.5,489.7,527.300,1.500)}${D(495.5,512.5,500.5,527.300,1.500)}${D(506.5,512.5,511.5,526.5,1.500)}
 ${R(330.5,532.5,441.500,590.5)}${R(340.5,547,350.500,581)}${R(457.2,544,568.5,583,15)}
 <path stroke="#f2f4f5" d="M647.700 462.300H753.500V595.300H647.700z"/><path stroke="#f2f4f5" d="M660.500 462.300v3.200H744.500v-3.200M660.500 595.300v-3.200H744.500v3.200M647.700 473.200h3.600V584h-3.600${teeth}"/>
 <g stroke="#b7bdc3">${lines.map(p=>`<polyline points="${p}"/>`).join('')}</g>
 <g fill="#212830" stroke="#c6cbcf" stroke-width="1.150">${via.map(([x,y])=>C(x,y,3.1)).join('')}</g></g>
 <g fill="#eef0f2">${pins}</g>
 <g fill="none" stroke="#d8dcdf"><path d="M42.500 625V655M8 658.500H38M38.500 655h7v6.500h-7zM45 616l9 9.500m0-9.500-9 9.500M10 647l4 4 4-4M14 651v5"/></g>
 <circle cx="1215.500" cy="234.500" r="36.500" fill="none" stroke="#4a5057" stroke-width="7.500"/>
 <path d="M1208 192h15v12h-15zM1208 265h15v14h-15zM1171 228h14v13h-14zM1246 228h14v13h-14z" fill="#212830" opacity=".45"/>
 <path d="M1198.500 217.500h33.500v34h-33.500z" fill="#c4c5c7" stroke="#e0e1e2" stroke-width=".6"/><path d="M1205 224h20v20h-20z" fill="#bbbcbf"/>
 <g fill="#c9cdd1" font-family='"Liberation Sans",sans-serif' font-weight="700" font-size="13" text-anchor="middle">
 <text transform="translate(1220 197.500) rotate(-90)">E</text><text transform="translate(1182.500 234.500) rotate(-90)">N</text><text transform="translate(1257.500 234.500) rotate(-90)">S</text><text transform="translate(1220 272) rotate(-90)">W</text>
 <text transform="translate(1219 234.500) rotate(-90)" font-size="9.500" font-weight="400" fill="#33363a" textLength="15" lengthAdjust="spacingAndGlyphs">TOP</text></g>
 <rect x="1199.500" y="293" width="31.500" height="11.500" rx="2.500" fill="#a5a9ad"/><text x="1202" y="301" font-family='"Liberation Sans",sans-serif' font-size="7.500" fill="#6a6f76" textLength="16">WCS</text>
 <rect x="1246.500" y="321" width="21.500" height="141.500" rx="2" fill="#5a5f64"/>
 <g fill="none" stroke="#4e5359" stroke-width="1.200"><path d="M1251 335h12v12h-12z"/><circle cx="1257" cy="341" r="4"/><path d="M1257 357v3M1251 369c10-6 10 8 0 12M1262 366l-4 8M1251 387l12 10M1263 387l-12 12M1257 405v20M1250 415h14M1257 401v2M1251 436h10v12h-10zM1254 439h11v7h-11z"/></g>
 </svg>
 <div class="vp"><cad-text size="8.500" w="83" font='"Liberation Sans",sans-serif'>[−][Top][2D Wireframe]</cad-text></div>
 <div class="win">${TR(1223,I('dmin',1233,14)+I('dmax',1246.5,14)+I('dclose',1260,14))}</div>
 <div class="sc"><i></i></div>
 <div class="cmd"><div class="tool">${TR(268,I('grip',276,13)+I('close',288.5,14)+I('wrench',311,17))}</div>${TR(322,I('prompt',335,16)+I('minus',348,14)+T('Type a command',359,480,`size="15" slant="italic" font='"DejaVu Sans Mono",monospace' style="color:#74787b"`)+I('up',1004.5,15))}</div>`});

define('cad-layout-tab',e=>`<style>:host{display:flex;align-items:center;justify-content:center;height:18px;box-sizing:border-box;padding-top:1px;background:${e.hasAttribute('on')?'linear-gradient(#5c5c5c,#8e8e8e)':'#555'};color:${e.hasAttribute('on')?'#fff':'#aaa'};clip-path:polygon(0 0,100% 0,calc(100% - 6px) 90%,calc(100% - 9px) 100%,9px 100%,6px 90%)}</style><cad-text w="${at(e,'tw')}" weight="${at(e,'weight','400')}">${at(e,'text')}</cad-text>`);

define('cad-status',()=>{
 const groups=[[521,571,T('MODEL',525,566,'style="color:#fff"')],[572,637,I('gridon',585,18)+I('snap',609,18)+I('arrL',629,16)],[639,742,I('ortho',652,18)+I('polar',676,18)+I('arrL',696,16)+I('iso',715,18)+I('arrL',734,16)],[742,806,I('otrack',754,18)+I('osnap',779,18)+I('arrL',799,16)],[806,847,I('osnap3',818,18)+I('arrL',838,16)],[848,954,I('anno1',861,18)+I('anno2',885,18)+I('anno3',909,18)+T('1:1',926,938,'style="color:#fff"')+I('arrL',946,14)],[957,997,I('gear',969,16)+I('arrL',989,14)],[997,1024,I('plus',1009,18)],[1025,1124,I('unit',1038,18)+T('Decimal',1055,1098,'style="color:#fff" weight="600"')+I('arrL',1115,15)],[1126,1152,I('quick',1138,19)],[1154,1180,I('perf',1166,18)],[1181,1231,I('graph',1195,20)+I('trust',1217,18)],[1232,1280,I('full',1244,18)+I('menu',1268,18)]];
 return `<style>:host{display:flex;height:28px;background:#3a3a3a;border-top:1px solid #6a6a6a;box-sizing:border-box;flex:none}
 .tabs{width:520px}.tabs>*{align-items:flex-start}.g{height:27px;box-sizing:border-box;background:#4c4c4c;border-left:1px solid #7a7a7a;border-right:1px solid #3a3a3a}.g>*{height:28px}
 .add{height:17px;background:#555;border-radius:0 0 6px 6px;display:flex;align-items:center;justify-content:center;color:#ccc}</style>
 <div class="tabs">${TR(0,`<cad-layout-tab on c="39.500" w="61" text="Model" weight="700" tw="36"></cad-layout-tab><cad-layout-tab c="101" w="61" text="Layout1" tw="41"></cad-layout-tab><cad-layout-tab c="167" w="65" text="Layout2" tw="42"></cad-layout-tab><div class="add" c="215" w="22"><cad-text w="9" size="15" weight="600">+</cad-text></div>`,'align-items:flex-start')}</div>
 ${TR(520,groups.map(([l,r,b])=>`<div class="g" c="${(l+r)/2}" w="${r-l}">${TR(l+1,b)}</div>`).join(''))}`});

define('cad-app',()=>`<style>
:host{display:block;width:1280px;height:720px;background:#000;box-sizing:border-box;padding-top:20px;font:12px/16px ${FONT};position:relative;overflow:hidden}
.top{display:flex;height:44px}.app{width:41px;height:39px;flex:none;background:linear-gradient(#9a9a9a,#858585);box-sizing:border-box;padding:5px 0 0 5px;box-shadow:0 5px #505050}
.sq{width:28px;height:27px;box-sizing:border-box;border:1px solid #2c2c2c;background:linear-gradient(#b5b5b5,#8a8a8a)}
.sq svg{display:block}.r{flex:1}</style>
<div class="top"><div class="app"><div class="sq"><svg width="26" height="25" viewBox="0 0 26 25"><path d="M3 20 9 2h4l6 18-5-1-1.500-4-4 .5L7 19z" fill="#c8262c"/><path d="m9 12 2-6 2 5.500z" fill="#a9a2a2"/><path d="m9 2-6 18 3-2 5-13z" fill="#97161c"/><path d="M20.500 12.500h4L22.500 15z" fill="#222"/></svg></div></div>
<div class="r"><cad-title></cad-title><cad-tabs></cad-tabs></div></div>
<cad-ribbon></cad-ribbon><cad-drawing></cad-drawing><cad-status></cad-status>`);
</script>
</body>
</html>
